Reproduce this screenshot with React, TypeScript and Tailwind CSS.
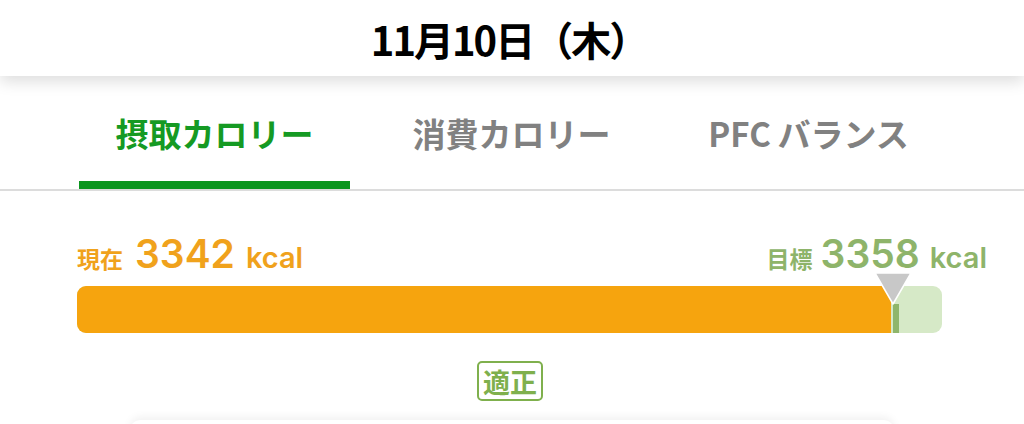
const jp = "font-['Noto_Sans_CJK_JP','Noto_Sans',sans-serif]";
const num = "font-['Inter','Noto_Sans',sans-serif]";

const tabs = [
  { label: "摂取カロリー", active: true },
  { label: "消費カロリー", active: false },
  { label: "PFC\u2009バランス", active: false },
];

export default function App() {
  const current = 3342;
  const target = 3358;

  return (
    <div className={`w-[1024px] h-[424px] overflow-hidden bg-white ${jp}`}>
      <header className="relative z-10 h-[76px] bg-white shadow-[0_6px_14px_rgba(0,0,0,0.13)] flex items-center justify-center">
        <h1 className="text-[40px] font-bold text-black leading-none pt-[1px] tracking-[-2px] ml-[-6px]">
          11月10日（木）
        </h1>
      </header>

      <nav className="h-[115px] flex px-[66px] border-b-2 border-[#dcdcdc]">
        {tabs.map((t) => (
          <div key={t.label} className="w-[297px] flex flex-col items-center">
            <div
              className={`flex-1 flex items-center pt-[10px] text-[33px] font-bold leading-none ${
                t.active ? "text-[#159a23]" : "text-[#818181]"
              }`}
            >
              {t.label}
            </div>
            <div
              className={`h-[8px] w-[271px] ${t.active ? "bg-[#0b951f]" : "bg-transparent"}`}
            />
          </div>
        ))}
      </nav>

      <section className="pl-[77px] pr-[37px] pt-[43px]">
        <div className="flex justify-between items-baseline leading-none h-[34px]">
          <div className="flex items-baseline text-[#f0a21c]">
            <span className="text-[23px] font-bold">現在</span>
            <span className={`ml-[12px] text-[39px] font-semibold ${num}`}>{current}</span>
            <span className={`ml-[11px] text-[29px] font-semibold ${num}`}>kcal</span>
          </div>
          <div className="flex items-baseline text-[#8eb46a]">
            <span className="text-[23px] font-bold">目標</span>
            <span className={`ml-[8px] text-[39px] font-semibold ${num}`}>{target}</span>
            <span className={`ml-[10px] text-[29px] font-semibold ${num}`}>kcal</span>
          </div>
        </div>

        <div className="relative mt-[18px] w-[865px] h-[47px]">
          <div className="h-full rounded-[9px] overflow-hidden bg-[#d6e9c7] flex">
            <div className="h-full w-[814px] bg-[#f6a40e]" />
          </div>
          <div className="absolute left-[816px] top-[18px] bottom-0 w-[6px] bg-[#8fb66b]" />
          <svg
            className="absolute left-[797px] top-[-14px]"
            width="38"
            height="34"
            viewBox="0 0 38 34"
          >
            <polygon
              points="1,1 37,1 19,32"
              fill="#c8c8c8"
              stroke="#ffffff"
              strokeWidth="1.5"
              strokeLinejoin="round"
            />
          </svg>
        </div>

        <div className="flex justify-center pr-[44px] mt-[28px]">
          <span className="w-[66px] h-[40px] border-2 border-[#7fb04d] rounded-[5px] flex items-center justify-center text-[27px] font-bold text-[#7fb04d] leading-none">
            適正
          </span>
        </div>
      </section>

      <div className="mx-[130px] mt-[19px] h-[40px] rounded-t-[10px] bg-white shadow-[0_-3px_8px_rgba(0,0,0,0.06)]" />
    </div>
  );
}
